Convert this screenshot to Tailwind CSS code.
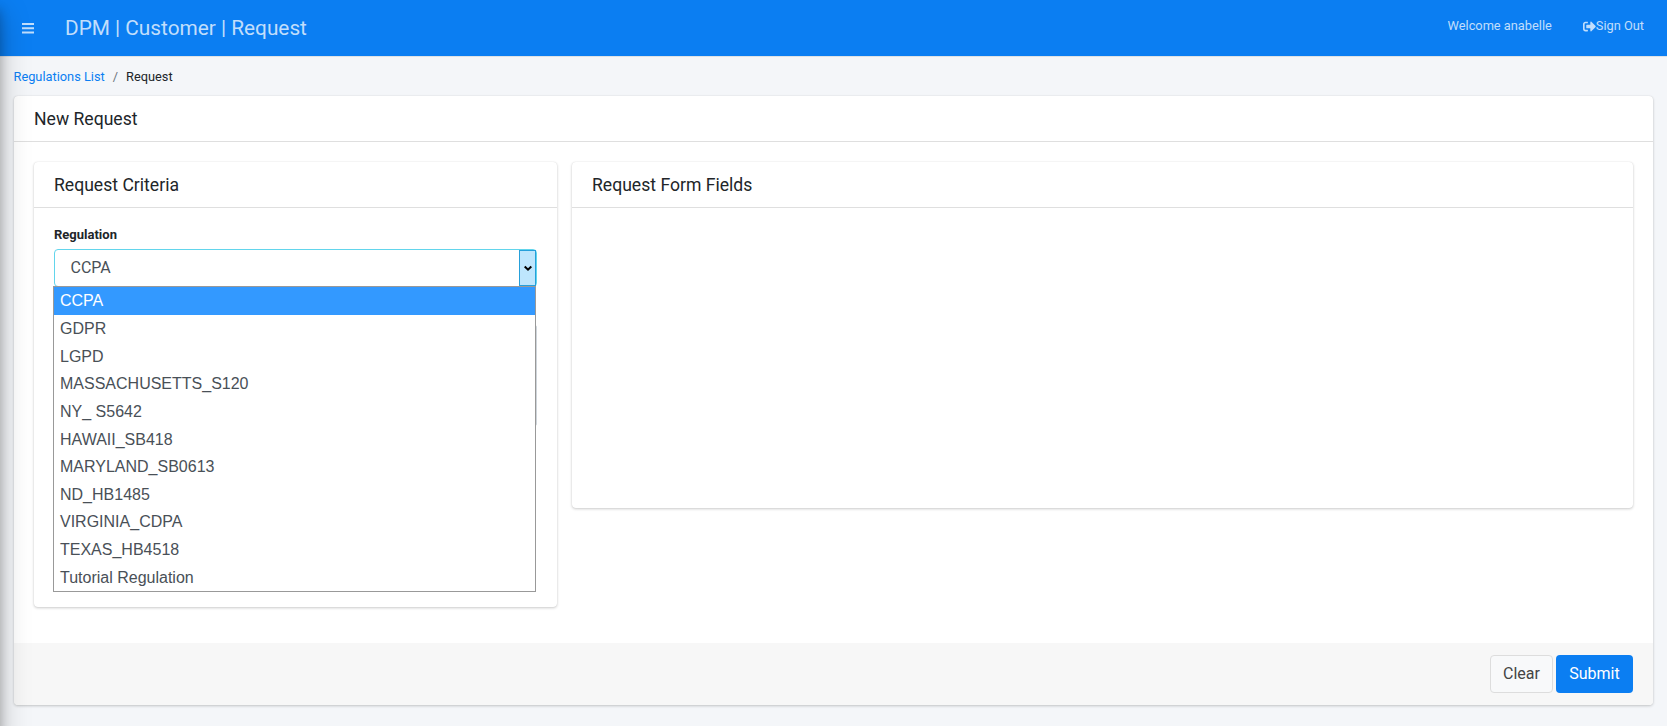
<!DOCTYPE html>
<html lang="en">
<head>
<meta charset="utf-8">
<title>DPM | Customer | Request</title>
<script src="https://cdn.jsdelivr.net/npm/@tailwindcss/browser@4"></script>
</head>
<body class="relative h-[726px] overflow-hidden bg-[#f4f6f9] font-['Roboto',sans-serif] text-base text-[#212529]">
<!-- edge shadow of the collapsed sidebar -->
<div class="absolute top-0 -left-[250px] z-20 h-[740px] w-[250px] shadow-[0_14px_28px_rgba(0,0,0,0.25),0_10px_10px_rgba(0,0,0,0.22)]"></div>

<header class="flex h-[57px] items-center border-b border-[#dee2e6] bg-[#0b7ef2] text-white/75">
  <svg class="ml-[22px] h-[11px] w-3" viewBox="0 0 12 11" fill="currentColor"><path d="M0 0h12v2H0zM0 4.300h12v2H0zM0 8.600h12v2H0z"/></svg>
  <h1 class="ml-[31px] text-[20.800px] leading-6">DPM | Customer | Request</h1>
  <nav class="mr-[23px] ml-auto flex gap-[31px] pb-1 text-[12.800px] leading-5">
    <span>Welcome anabelle</span>
    <a class="flex items-center"><svg class="h-[13px] w-[13px]" viewBox="0 0 512 512" fill="currentColor"><path d="M497 273L329 441c-15 15-41 4.500-41-17v-96H152c-13.300 0-24-10.700-24-24v-96c0-13.300 10.700-24 24-24h136V88c0-21.400 25.900-32 41-17l168 168c9.300 9.400 9.300 24.600 0 34zM192 436v-40c0-6.600-5.400-12-12-12H96c-17.700 0-32-14.300-32-32V160c0-17.700 14.300-32 32-32h84c6.600 0 12-5.400 12-12V76c0-6.600-5.400-12-12-12H96c-53 0-96 43-96 96v192c0 53 43 96 96 96h84c6.600 0 12-5.400 12-12z"/></svg>Sign Out</a>
  </nav>
</header>

<nav class="flex h-[39px] items-center pt-px pl-[13.500px] text-[12.800px]">
  <a class="text-[#0b7ef2]">Regulations List</a><span class="px-2 text-[#6c757d]">/</span><span>Request</span>
</nav>

<main class="mr-[14px] ml-[14px] flex h-[609px] flex-col overflow-visible rounded-[4px] bg-white shadow-[0_0_1px_rgba(0,0,0,0.125),0_1px_3px_rgba(0,0,0,0.2)]">
  <div class="h-[46px] shrink-0 border-b border-black/12.5 px-5 pt-[9px] text-[17.600px] leading-7">New Request</div>
  <div class="flex flex-1 items-start gap-[15px] px-5 pt-5">
    <section class="h-[445px] w-[523px] rounded-[4px] shadow-[0_0_1px_rgba(0,0,0,0.125),0_1px_3px_rgba(0,0,0,0.2)]">
      <h2 class="h-[46px] border-b border-black/12.5 px-5 pt-[9px] text-[17.600px] leading-7">Request Criteria</h2>
      <div class="relative flex flex-col px-5 pt-[17px]">
        <label class="h-6 text-[13px] leading-5 font-bold">Regulation</label>
        <div class="flex h-[38px] justify-between rounded-[4px] border border-[#62d5ec] bg-white">
          <span class="pl-[15.500px] leading-[35px] text-[#495057]">CCPA</span>
          <span class="flex w-[17px] items-center justify-center border border-[#26a0da] bg-[#bee6fd]">
            <svg class="h-[7px] w-2" viewBox="0 0 8 7" fill="none" stroke="#000" stroke-width="2"><path d="M.7 1.500L4 4.700 7.300 1.500"/></svg>
          </span>
        </div>
        <div class="mt-[38px] h-[101px] rounded-[2px] border border-[#ced4da]"></div>
        <ul class="absolute top-[78px] left-[19px] w-[483px] border border-[#999] bg-white font-['Liberation_Sans',sans-serif] text-[#495057]">
          <li class="h-7 bg-[#3399ff] pl-1.5 leading-7 text-white">CCPA</li>
          <li class="h-[27.650px] pl-1.5 leading-[27.650px]">GDPR</li>
          <li class="h-[27.650px] pl-1.5 leading-[27.650px]">LGPD</li>
          <li class="h-[27.650px] pl-1.5 leading-[27.650px]">MASSACHUSETTS_S120</li>
          <li class="h-[27.650px] pl-1.5 leading-[27.650px]">NY_ S5642</li>
          <li class="h-[27.650px] pl-1.5 leading-[27.650px]">HAWAII_SB418</li>
          <li class="h-[27.650px] pl-1.5 leading-[27.650px]">MARYLAND_SB0613</li>
          <li class="h-[27.650px] pl-1.5 leading-[27.650px]">ND_HB1485</li>
          <li class="h-[27.650px] pl-1.5 leading-[27.650px]">VIRGINIA_CDPA</li>
          <li class="h-[27.650px] pl-1.5 leading-[27.650px]">TEXAS_HB4518</li>
          <li class="h-[27.150px] pl-1.5 leading-[27.650px]">Tutorial Regulation</li>
        </ul>
      </div>
    </section>
    <section class="h-[346px] flex-1 rounded-[4px] shadow-[0_0_1px_rgba(0,0,0,0.125),0_1px_3px_rgba(0,0,0,0.2)]">
      <h2 class="h-[46px] border-b border-black/12.5 px-5 pt-[9px] text-[17.600px] leading-7">Request Form Fields</h2>
    </section>
  </div>
  <footer class="flex h-[62px] shrink-0 justify-end gap-[3px] rounded-b-[4px] bg-[#f7f7f7] px-5 pt-3">
    <button class="h-[38px] w-[63px] rounded-[4px] border border-[#ddd] bg-[#f8f9fa] pb-px text-[#444]">Clear</button>
    <button class="h-[38px] w-[77px] rounded-[4px] bg-[#0b7ef2] pb-px text-white">Submit</button>
  </footer>
</main>
</body>
</html>
